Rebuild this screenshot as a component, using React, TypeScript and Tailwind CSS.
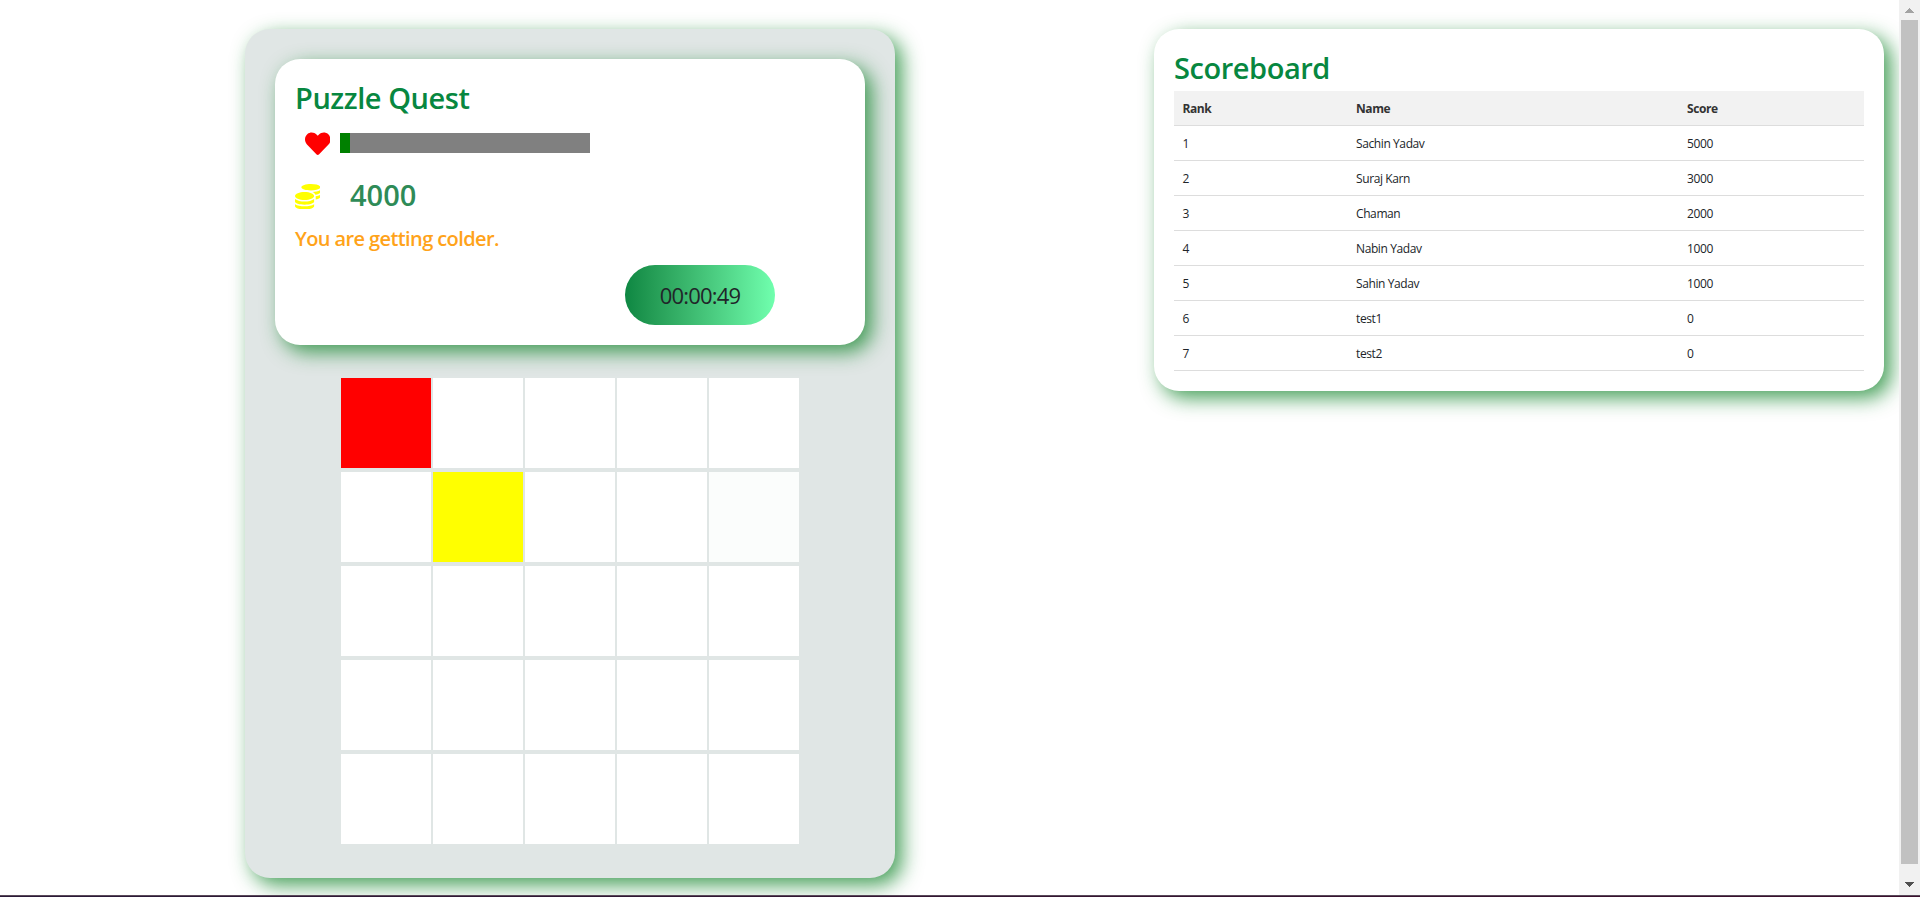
import { FaCoins, FaHeart } from "react-icons/fa";

const scores = [
  { name: "Sachin Yadav", score: 5000 },
  { name: "Suraj Karn", score: 3000 },
  { name: "Chaman", score: 2000 },
  { name: "Nabin Yadav", score: 1000 },
  { name: "Sahin Yadav", score: 1000 },
  { name: "test1", score: 0 },
  { name: "test2", score: 0 },
];

const cellColors: Record<number, string> = {
  0: "bg-[#ff0000]",
  6: "bg-[#ffff00]",
  9: "bg-[#fbfdfc]",
};

function StatusCard() {
  return (
    <section className="h-[286px] w-[590px] rounded-[25px] bg-white px-5 pt-5 shadow-[7px_7px_20px_#108428c4]">
      <h1 className="h-10 text-[29px] leading-[38px] font-semibold tracking-[-0.45px] text-[#078740]">Puzzle Quest</h1>
      <div className="mt-[14px] flex h-5 items-center">
        <FaHeart className="mt-px ml-[9.5px] size-[25.5px] text-[#ff0000]" />
        <div className="ml-[10px] h-5 w-[250px] bg-[#808080]">
          <div className="h-5 w-[10px] bg-[#008000]" />
        </div>
      </div>
      <div className="mt-[23px] flex h-10 items-center">
        <FaCoins className="mt-px -ml-[0.5px] size-[25.5px] text-[#ffff00]" />
        <span className="mb-0.5 ml-[30px] text-[29px] leading-[38px] font-semibold text-[#2e8b57]">4000</span>
      </div>
      <p className="mt-[8px] h-[30px] text-[20px] leading-[30px] font-semibold tracking-[-0.6px] text-[#ffa31a]">
        You are getting colder.
      </p>
      <div className="mt-[11px] ml-[330px] flex h-[60px] w-[150px] items-center justify-center rounded-[30px] bg-linear-to-r from-[#0d8742] to-[#70ffae] text-[22px] font-normal tracking-[-0.8px] text-[#212529]">
        00:00:49
      </div>
    </section>
  );
}

function Board() {
  return (
    <div className="mt-[33px] ml-[66px] grid w-[458px] grid-cols-[repeat(5,90px)] gap-x-[2px] gap-y-1">
      {Array.from({ length: 25 }, (_, i) => (
        <div key={i} className={`h-[90px] ${cellColors[i] ?? "bg-white"}`} />
      ))}
    </div>
  );
}

function Scoreboard() {
  return (
    <section className="h-[362px] w-[730px] rounded-[25px] bg-white px-5 pt-5 shadow-[7px_7px_20px_#108428c4]">
      <h2 className="h-[42px] text-[29px] leading-[37px] font-semibold tracking-[-0.45px] text-[#078740]">Scoreboard</h2>
      <table className="w-full table-fixed border-separate border-spacing-0 text-left text-[12px] leading-[18px] tracking-[-0.4px] text-[#212529]">
        <colgroup>
          <col className="w-[174px]" />
          <col className="w-[331px]" />
          <col />
        </colgroup>
        <thead>
          <tr className="h-[35px] bg-[#f2f2f2] font-bold text-[#333333]">
            <th className="border-b border-[#dddddd] px-2 pt-0.5 pl-[8.5px]">Rank</th>
            <th className="border-b border-[#dddddd] px-2 pt-0.5">Name</th>
            <th className="border-b border-[#dddddd] px-2 pt-0.5">Score</th>
          </tr>
        </thead>
        <tbody>
          {scores.map((row, i) => (
            <tr key={row.name} className="h-[35px]">
              <td className="border-b border-[#dddddd] px-2 pt-0.5 pl-[8.5px]">{i + 1}</td>
              <td className="border-b border-[#dddddd] px-2 pt-0.5">{row.name}</td>
              <td className="border-b border-[#dddddd] px-2 pt-0.5">{row.score}</td>
            </tr>
          ))}
        </tbody>
      </table>
    </section>
  );
}

function Scrollbar() {
  return (
    <div className="flex h-[895px] w-[21px] shrink-0 flex-col items-center bg-[#f1f1f1]">
      <svg className="mt-2 h-[5px] w-[9px]" viewBox="0 0 9 5" fill="#a3a3a3" shapeRendering="crispEdges">
        <path d="M4 0h1v1h1v1h1v1h1v1h1v1H0V4h1V3h1V2h1V1h1z" />
      </svg>
      <div className="mt-[7px] h-[844px] w-[17px] bg-[#c1c1c1]" />
      <svg className="mt-[18px] h-[5px] w-[9px]" viewBox="0 0 9 5" fill="#505050" shapeRendering="crispEdges">
        <path d="M0 0h9v1H8v1H7v1H6v1H5v1H4V4H3V3H2V2H1V1H0z" />
      </svg>
    </div>
  );
}

export default function App() {
  return (
    <div className="h-[897px] w-[1920px] overflow-hidden bg-white font-['Open_Sans','Noto_Sans',sans-serif]">
      <div className="flex h-[895px]">
        <main className="flex h-[895px] w-[1899px] items-start overflow-hidden pt-[29px] pl-[245px]">
          <div className="h-[849px] w-[650px] shrink-0 rounded-[25px] bg-[#e0e6e5] p-[30px] shadow-[7px_7px_20px_#108428c4]">
            <StatusCard />
            <Board />
          </div>
          <div className="ml-[259px] shrink-0">
            <Scoreboard />
          </div>
        </main>
        <Scrollbar />
      </div>
      <div className="h-[2px] border-t border-[#5a4a5a] bg-linear-to-r from-[#2b1a38] to-[#3c0f2d]" />
    </div>
  );
}
